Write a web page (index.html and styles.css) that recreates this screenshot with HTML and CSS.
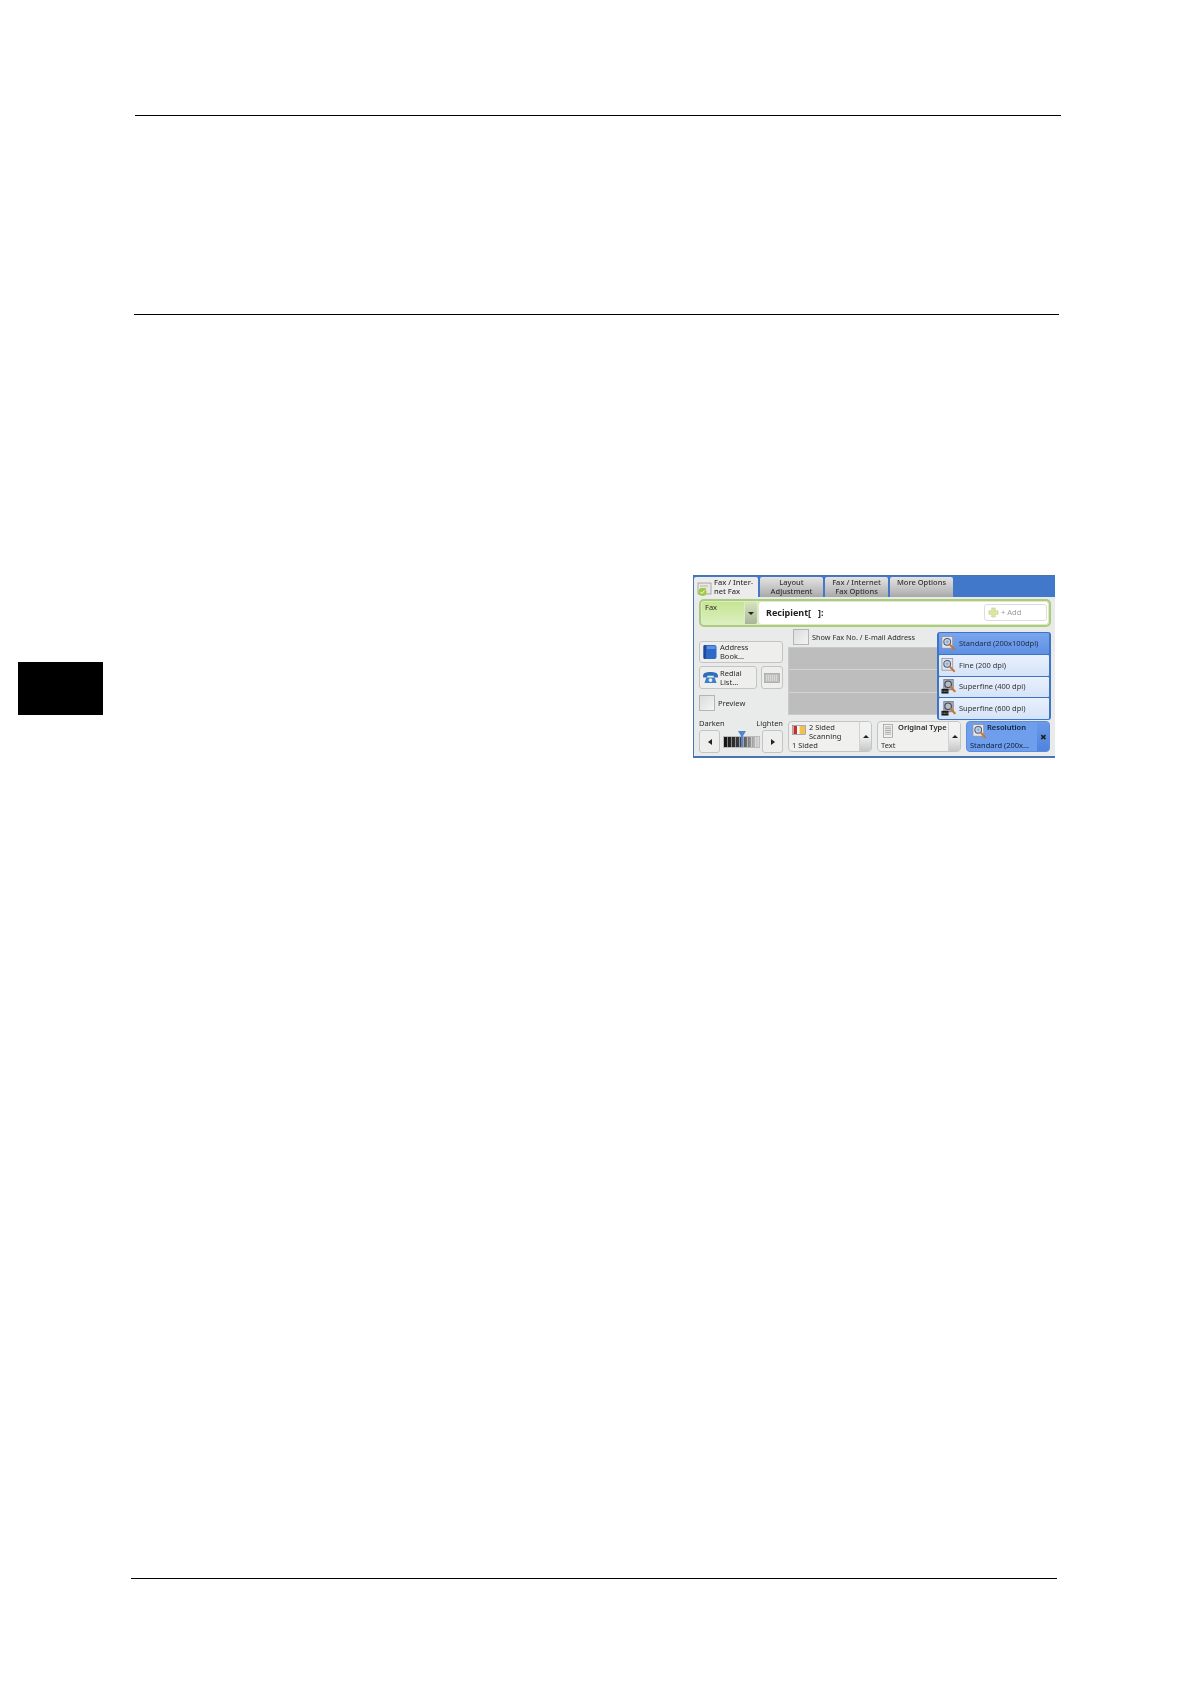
FILE: index.html
```html
<!DOCTYPE html>
<html lang="en">
<head>
<meta charset="utf-8">
<title>Fax / Internet Fax</title>
<link rel="stylesheet" href="styles.css">
</head>
<body>
<svg class="defs" width="0" height="0" aria-hidden="true">
  <symbol id="lens" viewBox="0 0 16 16">
    <rect x="1" y="0.5" width="11.5" height="12.5" fill="#e4e4ea" stroke="#8a8f9c" stroke-width="0.8"/>
    <circle cx="6.6" cy="6.2" r="3.6" fill="#c9d6ea" stroke="#4a5a78" stroke-width="1.1"/>
    <path d="M6.6 4.4v3.6M4.8 6.2h3.6" stroke="#7d8ea8" stroke-width="0.7"/>
    <path d="M9.4 9.2l4.6 4.8" stroke="#c7762c" stroke-width="2.2" stroke-linecap="round"/>
  </symbol>
  <symbol id="lens-hd" viewBox="0 0 16 16">
    <rect x="3" y="0.5" width="10" height="11" fill="#a9acb4" stroke="#70747e" stroke-width="0.8"/>
    <circle cx="7.6" cy="5.6" r="3.5" fill="#b4bcc9" stroke="#3f4654" stroke-width="1.2"/>
    <path d="M10.4 8.4l4.2 4.6" stroke="#c7762c" stroke-width="2.2" stroke-linecap="round"/>
    <rect x="0.5" y="10.5" width="7.5" height="5" fill="#1b1b1b"/>
    <path d="M1.5 13h5.5" stroke="#bbb" stroke-width="0.9" stroke-dasharray="1 .6"/>
  </symbol>
</svg>
<div class="page">
  <div class="rule rule-top"></div>
  <div class="rule rule-mid"></div>
  <div class="content">
    <div class="chapter-tab"></div>
    <div class="device">
      <div class="tabbar">
        <div class="tab tab-active">
          <svg class="tab-icon" viewBox="0 0 16 16"><rect x="1" y="2" width="13" height="11" fill="#e8e8e0" stroke="#9a9a90" stroke-width="0.8"/><path d="M3 5h8M3 7.500h6" stroke="#a8a89e" stroke-width="0.8"/><circle cx="5.500" cy="11" r="4" fill="#9ccb45"/><path d="M3.500 11l1.500 1.500 2.500-3" fill="none" stroke="#fff" stroke-width="1"/></svg>
          <span>Fax / Inter-<br>net Fax</span>
        </div>
        <div class="tab">Layout<br>Adjustment</div>
        <div class="tab">Fax / Internet<br>Fax Options</div>
        <div class="tab">More Options</div>
      </div>
      <div class="panel">
        <div class="recipient-bar">
          <div class="fax-select"><span>Fax</span></div>
          <div class="fax-drop"><i class="tri tri-down"></i></div>
          <div class="recipient-field">
            <span class="recipient-label">Recipient[&nbsp;&nbsp;&nbsp;]:</span>
            <div class="add-btn">
              <svg class="add-icon" viewBox="0 0 12 12"><path d="M4 1h4v3h3v4H8v3H4V8H1V4h3z" fill="#dbe6a6" stroke="#c3cf94" stroke-width="0.6"/></svg>
              <span>+ Add</span>
            </div>
          </div>
        </div>
        <div class="main">
          <div class="left-col">
            <div class="btn address-btn">
              <svg class="btn-icon" viewBox="0 0 14 16"><rect x="0.500" y="1" width="13" height="14" rx="2" fill="#2f68c6"/><rect x="0.500" y="1" width="2.500" height="14" rx="1" fill="#1c4a9a"/><rect x="4" y="2" width="8.500" height="3" fill="#5f92e2"/></svg>
              <span>Address<br>Book...</span>
            </div>
            <div class="redial-row">
              <div class="btn redial-btn">
                <svg class="phone-icon" viewBox="0 0 18 14"><path d="M1 5c0-3 3.500-4 8-4s8 1 8 4v2h-4.500V5h-7v2H1z" fill="#2f6fb8"/><path d="M4.500 7h9l2 6h-13z" fill="#3d80c8"/><circle cx="9" cy="9.800" r="2" fill="#e6eef8"/></svg>
                <span>Redial<br>List...</span>
              </div>
              <div class="btn key-btn">
                <svg class="key-icon" viewBox="0 0 16 10"><rect x="0.500" y="0.500" width="15" height="9" fill="#bdbdbd" stroke="#a0a0a0" stroke-width="0.7"/><path d="M2 3h12M2 5h12M2 7h12" stroke="#f2f2f2" stroke-width="1" stroke-dasharray="1.200 .8"/></svg>
              </div>
            </div>
            <div class="check-row preview-row"><div class="check"></div><span>Preview</span></div>
          </div>
          <div class="center-col">
            <div class="check-row show-row"><div class="check"></div><span>Show Fax No. / E-mail Address</span></div>
            <div class="list">
              <div class="list-row"></div>
              <div class="list-row"></div>
              <div class="list-row"></div>
            </div>
          </div>
          <div class="popup">
            <div class="popup-item selected"><svg class="lens"><use href="#lens"/></svg><span>Standard (200x100dpi)</span></div>
            <div class="popup-item"><svg class="lens"><use href="#lens"/></svg><span>Fine (200 dpi)</span></div>
            <div class="popup-item"><svg class="lens"><use href="#lens-hd"/></svg><span>Superfine (400 dpi)</span></div>
            <div class="popup-item"><svg class="lens"><use href="#lens-hd"/></svg><span>Superfine (600 dpi)</span></div>
          </div>
        </div>
        <div class="bottom">
          <div class="density">
            <div class="density-labels"><span>Darken</span><span>Lighten</span></div>
            <div class="density-controls">
              <div class="btn arrow-btn"><i class="tri tri-left"></i></div>
              <div class="slider">
                <div class="slider-bars"></div>
                <svg class="slider-mark" viewBox="0 0 8 16"><path d="M0 0h8L5 5v11H3V5z" fill="#4f86d6"/></svg>
              </div>
              <div class="btn arrow-btn"><i class="tri tri-right"></i></div>
            </div>
          </div>
          <div class="feature">
            <div class="feature-body">
              <div class="feature-head">
                <svg class="sided-icon" viewBox="0 0 14 10"><rect x="0.500" y="0.500" width="13" height="9" fill="#fff" stroke="#777" stroke-width="0.6"/><rect x="1.500" y="1" width="3.500" height="8" fill="#c8302c"/><rect x="7.500" y="1" width="5.500" height="8" fill="#f0c14e"/></svg>
                <span class="feature-title">2 Sided<br>Scanning</span>
              </div>
              <span class="feature-value">1 Sided</span>
            </div>
            <div class="feature-side"><i class="tri tri-up"></i></div>
          </div>
          <div class="feature">
            <div class="feature-body">
              <div class="feature-head">
                <svg class="doc-icon" viewBox="0 0 11 15"><rect x="0.500" y="0.500" width="10" height="14" fill="#f2f2f2" stroke="#8b8b8b" stroke-width="0.700"/><path d="M2 3h7M2 5h7M2 7h7M2 9h7M2 11h7" stroke="#8f8f8f" stroke-width="0.800"/></svg>
                <span class="feature-title strong">Original Type</span>
              </div>
              <span class="feature-value">Text</span>
            </div>
            <div class="feature-side"><i class="tri tri-up"></i></div>
          </div>
          <div class="feature feature-on">
            <div class="feature-body">
              <div class="feature-head">
                <svg class="res-icon"><use href="#lens"/></svg>
                <span class="feature-title strong">Resolution</span>
              </div>
              <span class="feature-value">Standard (200x...</span>
            </div>
            <div class="feature-close">&#10006;</div>
          </div>
        </div>
      </div>
    </div>
  </div>
  <div class="rule rule-foot"></div>
</div>
</body>
</html>
```

FILE: styles.css
```css
* { box-sizing: border-box; }
html, body { margin: 0; padding: 0; background: #fff; }
body { font-family: "Noto Sans", "Liberation Sans", sans-serif; color: #2a2a2a; }
.defs { position: absolute; }
.page { min-height: 1684px; padding-top: 115px; }

.rule { height: 1px; background: #000; }
.rule-top { margin-left: 135px; width: 926px; }
.rule-mid { margin-left: 134px; width: 925px; margin-top: 198px; }
.rule-foot { margin-left: 131px; width: 926px; margin-top: 820px; }

.content { display: flex; align-items: flex-start; margin-top: 260px; }
.chapter-tab { width: 85px; height: 53px; margin: 87px 0 0 18px; background: #000; }

.device {
  width: 362px; height: 183px; margin-left: 590px;
  display: flex; flex-direction: column;
  border-left: 1px solid #4a74ad; border-bottom: 2px solid #4a74ad;
  border-top: 1px solid #4a74ad;
  background: #e9eaea;
  font-size: 7.5px; line-height: 9px;
  filter: blur(0.3px);
}

.tabbar { height: 21px; background: #4178c9; display: flex; gap: 2px; padding-top: 1px; flex: none; }
.tab {
  width: 63px; height: 20px; text-align: center; font-size: 7.5px; line-height: 8.5px;
  padding-top: 1px; color: #333; border-radius: 2px 2px 0 0;
  background: linear-gradient(#e4e4e4, #bcbcbc 70%, #a8a8a8);
  font-weight: 500;
}
.tab-active {
  width: 64px; height: 21px; background: #ececec; display: flex; gap: 1px;
  padding: 1px 0 0 3px; text-align: left;
}
.tab-icon { width: 16px; height: 16px; margin-top: 3px; flex: none; }

.panel { flex: 1; display: flex; flex-direction: column; padding: 2px 0 0 5px; position: relative; }

.recipient-bar {
  width: 352px; height: 28px; display: flex; align-items: stretch; flex: none;
  background: #dfeacb; border: 2px solid #a9cd7a; border-radius: 5px; padding: 1px;
}
.fax-select {
  width: 42px; background: linear-gradient(#c6e592, #dcefc0); padding: 1px 0 0 3px; border-radius: 2px 0 0 2px;
}
.fax-drop {
  width: 12px; margin-left: 1px; margin-right: 2px; display: flex; align-items: center; justify-content: center;
  background: linear-gradient(#d6e4bc, #a9b59b); border-radius: 0 2px 2px 0;
}
.recipient-field {
  flex: 1; background: #fff; border-radius: 3px; display: flex; align-items: center; justify-content: space-between;
  padding: 0 1px 1px 7px;
}
.recipient-label { font-size: 9px; font-weight: 700; color: #222; }
.add-btn {
  width: 63px; height: 17px; display: flex; align-items: center; gap: 2px; padding-left: 3px;
  border: 1px solid #ddd; border-radius: 3px; color: #9a9a9a; font-size: 7.5px;
}
.add-icon { width: 11px; height: 11px; }

.tri { display: block; width: 0; height: 0; border-style: solid; border-color: transparent; }
.tri-down { border-width: 3px 3px 0; border-top-color: #222; }
.tri-up { border-width: 0 3.500px 3.500px; border-bottom-color: #222; }
.tri-left { border-width: 3px 4px 3px 0; border-right-color: #222; }
.tri-right { border-width: 3px 0 3px 4px; border-left-color: #222; }

.main { position: relative; display: flex; height: 93px; gap: 5px; flex: none; }
.left-col { width: 84px; flex: none; padding-top: 14px; }
.btn {
  background: #eeeeec; border: 1px solid #c4c4c4; border-radius: 3px;
  display: flex; align-items: center;
}
.address-btn { height: 22px; padding-left: 3px; gap: 3px; }
.btn-icon { width: 14px; height: 16px; flex: none; }
.redial-row { display: flex; gap: 4px; margin-top: 3px; }
.redial-btn { width: 58px; height: 23px; padding-left: 2px; gap: 1px; }
.phone-icon { width: 17px; height: 13px; flex: none; }
.key-btn { width: 22px; height: 23px; justify-content: center; }
.key-icon { width: 16px; height: 10px; }
.check-row { display: flex; align-items: center; gap: 3px; }
.check {
  width: 16px; height: 16px; flex: none; border: 1px solid #b5b5b5;
  background: linear-gradient(135deg, #dcdcdc, #f4f4f4);
}
.preview-row { margin-top: 6px; }

.center-col { flex: 1; }
.show-row { margin: 2px 0 2px 5px; font-size: 7.3px; }
.list { width: 150px; height: 68px; display: flex; flex-direction: column; gap: 1px; background: #d4d4d4; border: 1px solid #c9c9c9; }
.list-row { flex: 1; background: #bdbdbd; }

.popup {
  position: absolute; left: 238px; top: 5px; width: 114px; height: 88px;
  display: flex; flex-direction: column; gap: 1px; padding: 1px 2px;
  background: #3f73c4; border-radius: 3px;
}
.popup-item {
  flex: 1; display: flex; align-items: center; gap: 3px; padding-left: 2px;
  background: linear-gradient(#e8f0fc, #d5e3f8); color: #333; border-radius: 1px;
}
.popup-item.selected { background: linear-gradient(#7ba6ee, #5f90e4); color: #1d2a44; }
.lens { width: 15px; height: 15px; flex: none; }

.bottom { display: flex; flex: none; }
.density { width: 84px; flex: none; margin-top: -1px; }
.density-labels { display: flex; justify-content: space-between; }
.density-controls { display: flex; align-items: center; justify-content: space-between; margin-top: 2px; }
.arrow-btn { width: 21px; height: 23px; justify-content: center; }
.slider { position: relative; width: 37px; height: 12px; }
.slider-bars {
  height: 12px; margin-top: 0;
  background:
    repeating-linear-gradient(90deg, transparent 0 3px, rgba(255,255,255,.45) 3px 4px),
    linear-gradient(90deg, #111, #444 50%, #ddd);
  border: 1px solid #bbb;
}
.slider-mark { position: absolute; left: 15px; top: -6px; width: 8px; height: 18px; }

.feature {
  width: 84px; height: 31px; margin-left: 5px; display: flex; flex: none; margin-top: 1px;
  background: #f0f0ee; border: 1px solid #c4c4c4; border-radius: 4px; overflow: hidden;
}
.feature-body { flex: 1; display: flex; flex-direction: column; justify-content: space-between; padding: 1px 0 2px 3px; min-width: 0; }
.feature-head { display: flex; gap: 3px; }
.feature-title { white-space: nowrap; font-size: 7.5px; line-height: 9px; }
.strong { font-weight: 600; }
.feature-value { white-space: nowrap; line-height: 8px; }
.feature-side {
  width: 12px; flex: none; display: flex; align-items: center; justify-content: center;
  background: linear-gradient(#f2f2f2, #f0f0f0 50%, #c6c6c6); border-left: 1px solid #d2d2d2;
}
.sided-icon { width: 14px; height: 10px; margin-top: 2px; flex: none; }
.doc-icon { width: 10px; height: 14px; flex: none; margin: 1px 2px 0 2px; }
.feature-on { background: #6f9fec; border-color: #5b8ce0; color: #10203c; }
.feature-on .feature-head { gap: 0; }
.feature-close {
  width: 12px; flex: none; display: flex; align-items: center; justify-content: center;
  background: linear-gradient(#6a9aea, #4f83dc); font-size: 8px; color: #222;
}
.res-icon { width: 15px; height: 15px; margin: 1px 0 0 2px; flex: none; }
```
